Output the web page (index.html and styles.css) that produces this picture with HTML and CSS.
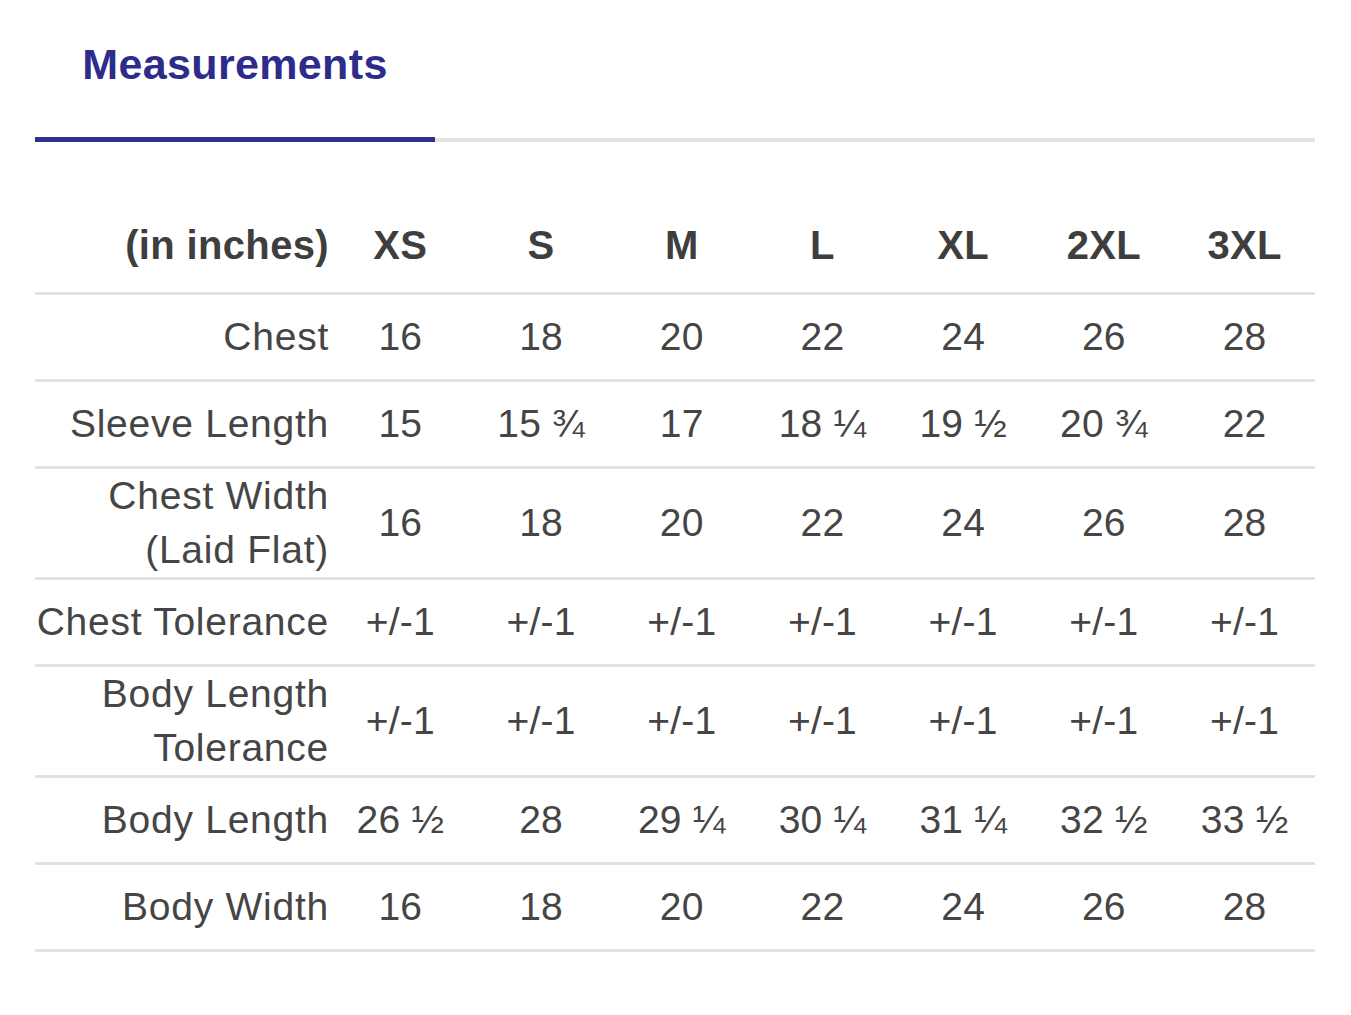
FILE: index.html
```html
<!DOCTYPE html>
<html lang="en">
<head>
<meta charset="utf-8">
<title>Measurements</title>
<link rel="stylesheet" href="styles.css">
</head>
<body>
<div class="page">
  <div class="tabbar">
    <div class="tab active">Measurements</div>
    <div class="tab-rest"></div>
  </div>
  <table class="sizes">
    <colgroup>
      <col class="col-label">
      <col><col><col><col><col><col><col>
    </colgroup>
    <thead>
      <tr>
        <th class="label">(in inches)</th>
        <th>XS</th><th>S</th><th>M</th><th>L</th><th>XL</th><th>2XL</th><th>3XL</th>
      </tr>
    </thead>
    <tbody>
      <tr><td class="label">Chest</td><td>16</td><td>18</td><td>20</td><td>22</td><td>24</td><td>26</td><td>28</td></tr>
      <tr><td class="label">Sleeve Length</td><td>15</td><td>15 ¾</td><td>17</td><td>18 ¼</td><td>19 ½</td><td>20 ¾</td><td>22</td></tr>
      <tr><td class="label">Chest Width<br>(Laid Flat)</td><td>16</td><td>18</td><td>20</td><td>22</td><td>24</td><td>26</td><td>28</td></tr>
      <tr><td class="label">Chest Tolerance</td><td>+/-1</td><td>+/-1</td><td>+/-1</td><td>+/-1</td><td>+/-1</td><td>+/-1</td><td>+/-1</td></tr>
      <tr><td class="label">Body Length<br>Tolerance</td><td>+/-1</td><td>+/-1</td><td>+/-1</td><td>+/-1</td><td>+/-1</td><td>+/-1</td><td>+/-1</td></tr>
      <tr><td class="label">Body Length</td><td>26 ½</td><td>28</td><td>29 ¼</td><td>30 ¼</td><td>31 ¼</td><td>32 ½</td><td>33 ½</td></tr>
      <tr><td class="label">Body Width</td><td>16</td><td>18</td><td>20</td><td>22</td><td>24</td><td>26</td><td>28</td></tr>
    </tbody>
  </table>
</div>
</body>
</html>
```
FILE: styles.css
```css
html, body {
  margin: 0;
  padding: 0;
  background: #ffffff;
}

.page {
  width: 1280px;
  margin-left: 35px;
  font-family: "Liberation Sans", Arial, sans-serif;
}

.tabbar {
  display: flex;
  align-items: flex-end;
}

.tab {
  width: 400px;
  box-sizing: border-box;
  text-align: center;
  font-size: 43px;
  line-height: 50px;
  font-weight: bold;
  letter-spacing: 0.35px;
  color: #2e2c8a;
  padding-top: 39px;
  padding-bottom: 48px;
  border-bottom: 5px solid #2e3090;
}

.tab-rest {
  flex: 1;
  border-bottom: 4px solid #e4e4e4;
}

.sizes {
  width: 1280px;
  table-layout: fixed;
  border-collapse: collapse;
  margin-top: 64px;
  color: #454545;
}

.col-label {
  width: 295px;
}

.sizes th,
.sizes td {
  padding: 0;
  height: 84px;
  text-align: center;
  vertical-align: middle;
  border-bottom: 3px solid #e2e2e2;
  font-size: 39px;
  line-height: 54px;
  letter-spacing: 0.2px;
  white-space: nowrap;
}

.sizes th {
  font-weight: bold;
  font-size: 40px;
  color: #3e3e3e;
  padding-bottom: 8px;
  height: 78px;
  letter-spacing: 0.35px;
}

.sizes .label {
  text-align: right;
  padding-right: 1px;
}

.sizes td.label {
  letter-spacing: 0.75px;
}
```
